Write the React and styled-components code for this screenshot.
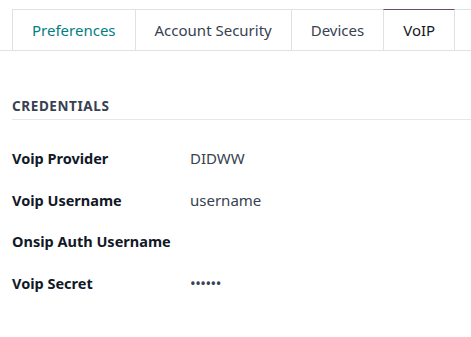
import React from "react";
import styled, { createGlobalStyle } from "styled-components";

const Global = createGlobalStyle`
  html, body { margin: 0; padding: 0; background: #fff; }
  body { font-family: "Noto Sans", "Open Sans", sans-serif; overflow: hidden; }
`;

const Page = styled.div`
  width: 471px;
  height: 337px;
  overflow: hidden;
  padding-top: 9px;
  box-sizing: border-box;
`;

const TabBar = styled.ul`
  display: flex;
  margin: 0;
  padding: 0 0 0 12px;
  list-style: none;
  border-bottom: 1px solid #dee2e6;
  white-space: nowrap;
  overflow: hidden;
`;

const Tab = styled.li`
  flex: none;
  margin-bottom: -1px;
  margin-left: -1px;
  &:first-child { margin-left: 0; }
  border: 1px solid #dee2e6;
  border-top-color: ${(p) => (p.$active ? "#714b67" : "#dee2e6")};
  border-bottom-color: ${(p) => (p.$active ? "#fff" : "#dee2e6")};
  background: #fff;
  position: relative;
  z-index: ${(p) => (p.$active ? 1 : 0)};
  height: 42px;
  min-width: ${(p) => (p.$spacer ? "40px" : "0")};
  box-sizing: border-box;
  padding: 0 19px;
  display: flex;
  align-items: center;
  font-size: 15px;
  color: ${(p) => p.$color || "#374151"};
`;

const Section = styled.div`
  padding: 46px 0 0 12px;
`;

const SectionTitle = styled.div`
  font-size: 13.5px;
  font-weight: 700;
  color: #374151;
  letter-spacing: 0.6px;
  padding-bottom: 4px;
  border-bottom: 1px solid #e5e7eb;
  line-height: 18px;
`;

const Fields = styled.div`
  display: grid;
  grid-template-columns: 178px 1fr;
  grid-auto-rows: 41.7px;
  padding-top: 17px;
  align-items: center;
`;

const Label = styled.div`
  font-size: 14.5px;
  font-weight: 700;
  color: #111827;
`;

const Value = styled.div`
  font-size: 15px;
  color: #374151;
  letter-spacing: ${(p) => (p.$secret ? "-0.5px" : "0")};
`;

const fields = [
  ["Voip Provider", "DIDWW"],
  ["Voip Username", "username"],
  ["Onsip Auth Username", ""],
  ["Voip Secret", "••••••", true],
];

export default function App() {
  return (
    <Page>
      <Global />
      <TabBar>
        <Tab $color="#017e84">Preferences</Tab>
        <Tab>Account Security</Tab>
        <Tab>Devices</Tab>
        <Tab $active $color="#111827">VoIP</Tab>
        <Tab $spacer />
      </TabBar>
      <Section>
        <SectionTitle>CREDENTIALS</SectionTitle>
        <Fields>
          {fields.map(([l, v, s]) => (
            <React.Fragment key={l}>
              <Label>{l}</Label>
              <Value $secret={s}>{v}</Value>
            </React.Fragment>
          ))}
        </Fields>
      </Section>
    </Page>
  );
}
